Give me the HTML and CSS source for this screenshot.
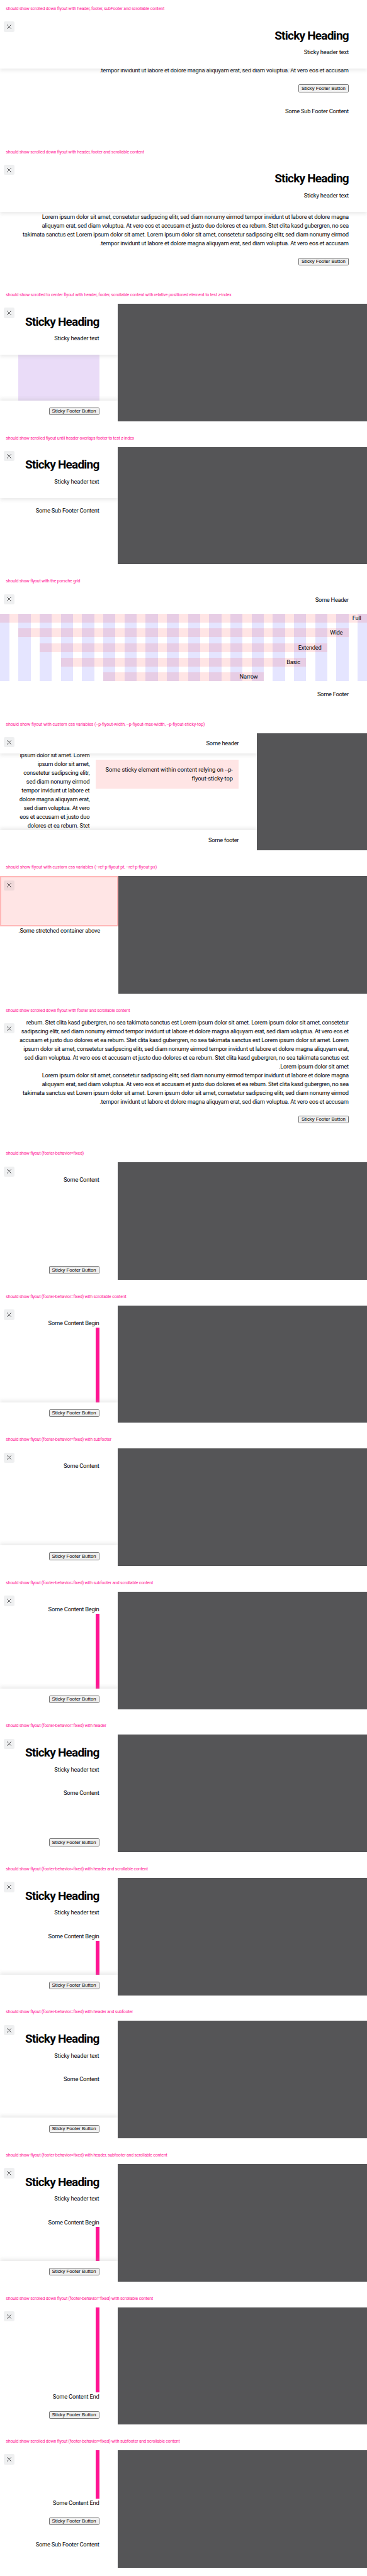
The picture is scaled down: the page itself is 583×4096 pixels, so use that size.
FILE: index.html
```html
<!DOCTYPE html>
<html lang="en">
<head>
<meta charset="utf-8">
<title>Flyout states</title>
<link rel="stylesheet" href="styles.css">
</head>
<body>
<svg class="defs" aria-hidden="true"><symbol id="close" viewBox="0 0 12 12"><path d="M.4.4 11.6 11.6M11.6.4.4 11.6" fill="none" stroke="#010205" stroke-width="1.2"/></symbol></svg>

<section class="case">
  <h2 class="title">should show scrolled down flyout with header, footer, subFooter and scrollable content</h2>
  <div class="stage"><div class="flyout full">
    <button class="close"><svg><use href="#close"/></svg></button>
    <header class="header raised"><h1 class="heading">Sticky Heading</h1><p>Sticky header text</p></header>
    <div class="content tucked"><p>.tempor invidunt ut labore et dolore magna aliquyam erat, sed diam voluptua. At vero eos et accusam</p></div>
    <footer class="footer inline-footer"><button class="btn">Sticky Footer Button</button></footer>
    <div class="sub-footer">Some Sub Footer Content</div>
  </div></div>
</section>

<section class="case">
  <h2 class="title">should show scrolled down flyout with header, footer and scrollable content</h2>
  <div class="stage"><div class="flyout full">
    <button class="close"><svg><use href="#close"/></svg></button>
    <header class="header raised"><h1 class="heading">Sticky Heading</h1><p>Sticky header text</p></header>
    <div class="content below"><p>Lorem ipsum dolor sit amet, consetetur sadipscing elitr, sed diam nonumy eirmod tempor invidunt ut labore et dolore magna<br>aliquyam erat, sed diam voluptua. At vero eos et accusam et justo duo dolores et ea rebum. Stet clita kasd gubergren, no sea<br>takimata sanctus est Lorem ipsum dolor sit amet. Lorem ipsum dolor sit amet, consetetur sadipscing elitr, sed diam nonumy eirmod<br>.tempor invidunt ut labore et dolore magna aliquyam erat, sed diam voluptua. At vero eos et accusam</p></div>
    <footer class="footer"><button class="btn">Sticky Footer Button</button></footer>
  </div></div>
</section>

<section class="case">
  <h2 class="title wordy">should show scrolled to center flyout with header, footer, scrollable content with relative positioned element to test z-index</h2>
  <div class="stage"><div class="flyout">
    <button class="close"><svg><use href="#close"/></svg></button>
    <header class="header raised"><h1 class="heading">Sticky Heading</h1><p>Sticky header text</p></header>
    <div class="content fill"><div class="lilac"></div></div>
    <footer class="footer lifted"><button class="btn">Sticky Footer Button</button></footer>
  </div></div>
</section>

<section class="case">
  <h2 class="title">should show scrolled flyout until header overlaps footer to test z-index</h2>
  <div class="stage"><div class="flyout">
    <button class="close"><svg><use href="#close"/></svg></button>
    <header class="header raised"><h1 class="heading">Sticky Heading</h1><p>Sticky header text</p></header>
    <div class="sub-footer near">Some Sub Footer Content</div>
  </div></div>
</section>

<section class="case">
  <h2 class="title">should show flyout with the porsche grid</h2>
  <div class="stage"><div class="flyout full">
    <button class="close"><svg><use href="#close"/></svg></button>
    <header class="header small">Some Header</header>
    <div class="grid">
      <div class="columns"><i></i><i></i><i></i><i></i><i></i><i></i><i></i><i></i><i></i><i></i><i></i><i></i><i></i><i></i><i></i><i></i><i></i><i></i></div>
      <span class="span g-full">Full</span>
      <span class="span g-wide">Wide</span>
      <span class="span g-extended">Extended</span>
      <span class="span g-basic">Basic</span>
      <span class="span g-narrow">Narrow</span>
    </div>
    <footer class="footer text-footer">Some Footer</footer>
  </div></div>
</section>

<section class="case">
  <h2 class="title dashed">should show flyout with custom css variables (--p-flyout-width, --p-flyout-max-width, --p-flyout-sticky-top)</h2>
  <div class="stage"><div class="flyout custom">
    <button class="close"><svg><use href="#close"/></svg></button>
    <header class="header small raised">Some header</header>
    <div class="content fill split">
      <p class="column">ipsum dolor sit amet. Lorem<br>ipsum dolor sit amet,<br>consetetur sadipscing elitr,<br>sed diam nonumy eirmod<br>tempor invidunt ut labore et<br>dolore magna aliquyam erat,<br>sed diam voluptua. At vero<br>eos et accusam et justo duo<br>dolores et ea rebum. Stet</p>
      <p class="sticky-box">Some sticky element within content relying on --p-<br>flyout-sticky-top</p>
    </div>
    <footer class="footer lifted text-footer">Some footer</footer>
  </div></div>
</section>

<section class="case">
  <h2 class="title dashed">should show flyout with custom css variables (--ref-p-flyout-pt, --ref-p-flyout-px)</h2>
  <div class="stage"><div class="flyout stretched">
    <button class="close"><svg><use href="#close"/></svg></button>
    <div class="stretch-box"></div>
    <p class="content">.Some stretched container above</p>
  </div></div>
</section>

<section class="case">
  <h2 class="title">should show scrolled down flyout with footer and scrollable content</h2>
  <div class="stage"><div class="flyout full">
    <button class="close"><svg><use href="#close"/></svg></button>
    <div class="content scrolled"><p>rebum. Stet clita kasd gubergren, no sea takimata sanctus est Lorem ipsum dolor sit amet. Lorem ipsum dolor sit amet, consetetur<br>sadipscing elitr, sed diam nonumy eirmod tempor invidunt ut labore et dolore magna aliquyam erat, sed diam voluptua. At vero eos et<br>accusam et justo duo dolores et ea rebum. Stet clita kasd gubergren, no sea takimata sanctus est Lorem ipsum dolor sit amet. Lorem<br>ipsum dolor sit amet, consetetur sadipscing elitr, sed diam nonumy eirmod tempor invidunt ut labore et dolore magna aliquyam erat,<br>sed diam voluptua. At vero eos et accusam et justo duo dolores et ea rebum. Stet clita kasd gubergren, no sea takimata sanctus est<br>.Lorem ipsum dolor sit amet<br>Lorem ipsum dolor sit amet, consetetur sadipscing elitr, sed diam nonumy eirmod tempor invidunt ut labore et dolore magna<br>aliquyam erat, sed diam voluptua. At vero eos et accusam et justo duo dolores et ea rebum. Stet clita kasd gubergren, no sea<br>takimata sanctus est Lorem ipsum dolor sit amet. Lorem ipsum dolor sit amet, consetetur sadipscing elitr, sed diam nonumy eirmod<br>.tempor invidunt ut labore et dolore magna aliquyam erat, sed diam voluptua. At vero eos et accusam</p></div>
    <footer class="footer"><button class="btn">Sticky Footer Button</button></footer>
  </div></div>
</section>

<section class="case">
  <h2 class="title">should show flyout (footer-behavior=fixed)</h2>
  <div class="stage"><div class="flyout">
    <button class="close"><svg><use href="#close"/></svg></button>
    <div class="content fill padded"><p>Some Content</p></div>
    <footer class="footer"><button class="btn">Sticky Footer Button</button></footer>
  </div></div>
</section>

<section class="case">
  <h2 class="title">should show flyout (footer-behavior=fixed) with scrollable content</h2>
  <div class="stage"><div class="flyout">
    <button class="close"><svg><use href="#close"/></svg></button>
    <div class="content fill padded"><p>Some Content Begin</p><div class="bar"></div></div>
    <footer class="footer lifted"><button class="btn">Sticky Footer Button</button></footer>
  </div></div>
</section>

<section class="case">
  <h2 class="title">should show flyout (footer-behavior=fixed) with subfooter</h2>
  <div class="stage"><div class="flyout">
    <button class="close"><svg><use href="#close"/></svg></button>
    <div class="content fill padded"><p>Some Content</p></div>
    <footer class="footer lifted"><button class="btn">Sticky Footer Button</button></footer>
  </div></div>
</section>

<section class="case">
  <h2 class="title">should show flyout (footer-behavior=fixed) with subfooter and scrollable content</h2>
  <div class="stage"><div class="flyout">
    <button class="close"><svg><use href="#close"/></svg></button>
    <div class="content fill padded"><p>Some Content Begin</p><div class="bar"></div></div>
    <footer class="footer lifted"><button class="btn">Sticky Footer Button</button></footer>
  </div></div>
</section>

<section class="case">
  <h2 class="title">should show flyout (footer-behavior=fixed) with header</h2>
  <div class="stage"><div class="flyout">
    <button class="close"><svg><use href="#close"/></svg></button>
    <header class="header"><h1 class="heading">Sticky Heading</h1><p>Sticky header text</p></header>
    <div class="content fill spaced"><p>Some Content</p></div>
    <footer class="footer"><button class="btn">Sticky Footer Button</button></footer>
  </div></div>
</section>

<section class="case">
  <h2 class="title">should show flyout (footer-behavior=fixed) with header and scrollable content</h2>
  <div class="stage"><div class="flyout">
    <button class="close"><svg><use href="#close"/></svg></button>
    <header class="header"><h1 class="heading">Sticky Heading</h1><p>Sticky header text</p></header>
    <div class="content fill spaced"><p>Some Content Begin</p><div class="bar"></div></div>
    <footer class="footer lifted"><button class="btn">Sticky Footer Button</button></footer>
  </div></div>
</section>

<section class="case">
  <h2 class="title">should show flyout (footer-behavior=fixed) with header and subfooter</h2>
  <div class="stage"><div class="flyout">
    <button class="close"><svg><use href="#close"/></svg></button>
    <header class="header"><h1 class="heading">Sticky Heading</h1><p>Sticky header text</p></header>
    <div class="content fill spaced"><p>Some Content</p></div>
    <footer class="footer lifted"><button class="btn">Sticky Footer Button</button></footer>
  </div></div>
</section>

<section class="case">
  <h2 class="title">should show flyout (footer-behavior=fixed) with header, subfooter and scrollable content</h2>
  <div class="stage"><div class="flyout">
    <button class="close"><svg><use href="#close"/></svg></button>
    <header class="header"><h1 class="heading">Sticky Heading</h1><p>Sticky header text</p></header>
    <div class="content fill spaced"><p>Some Content Begin</p><div class="bar"></div></div>
    <footer class="footer lifted"><button class="btn">Sticky Footer Button</button></footer>
  </div></div>
</section>

<section class="case">
  <h2 class="title">should show scrolled down flyout (footer-behavior=fixed) with scrollable content</h2>
  <div class="stage"><div class="flyout">
    <button class="close"><svg><use href="#close"/></svg></button>
    <div class="content fill end"><div class="bar"></div><p>Some Content End</p></div>
    <footer class="footer"><button class="btn">Sticky Footer Button</button></footer>
  </div></div>
</section>

<section class="case">
  <h2 class="title">should show scrolled down flyout (footer-behavior=fixed) with subfooter and scrollable content</h2>
  <div class="stage"><div class="flyout">
    <button class="close"><svg><use href="#close"/></svg></button>
    <div class="content short-bar"><div class="bar"></div><p>Some Content End</p></div>
    <footer class="footer inline-footer"><button class="btn">Sticky Footer Button</button></footer>
    <div class="sub-footer">Some Sub Footer Content</div>
  </div></div>
</section>
</body>
</html>
```
FILE: styles.css
```css
/* 1rem = ten design pixels */
html { font-size: 5.8345px; }
* { box-sizing: border-box; }
body {
  margin: 0;
  background: #fff;
  color: #010205;
  font-family: Roboto, "Liberation Sans", sans-serif;
  font-size: 1.6rem;
  line-height: 2.4rem;
  letter-spacing: -.0365rem;
  overflow-x: hidden;
}
p, h1, h2 { margin: 0; }
.defs { position: absolute; width: 0; height: 0; }

.case { height: 39rem; overflow: hidden; }
.title {
  height: 4.8rem;
  padding: 1.2rem 0 0 1.6rem;
  color: #ff1493;
  font-size: 1.2rem;
  font-weight: 400;
  letter-spacing: -.033rem;
  white-space: nowrap;
}
.title.wordy { letter-spacing: -.027rem; }
.title.dashed { letter-spacing: -.008rem; }
.stage { display: flex; height: 32rem; overflow: hidden; background: #555557; }

.flyout {
  position: relative;
  display: flex;
  flex-direction: column;
  width: 32rem;
  flex: none;
  overflow: hidden;
  background: #fff;
  text-align: right;
  white-space: nowrap;
}
.full { width: 100%; }
.custom { width: 70rem; }
.stretched { width: 32.2rem; }

.close {
  position: absolute;
  z-index: 3;
  top: 1.1rem;
  left: 1.1rem;
  display: flex;
  align-items: center;
  justify-content: center;
  width: 2.8rem;
  height: 2.8rem;
  padding: 0;
  border: 0;
  border-radius: .4rem;
  background: rgba(100, 105, 115, .1);
}
.close svg { width: 1.2rem; height: 1.2rem; }

.header {
  position: relative;
  z-index: 2;
  flex: none;
  height: 13.9rem;
  padding: 3.2rem 5rem 0;
  background: #fff;
}
.header.small { height: 5.6rem; padding-top: 1.6rem; letter-spacing: -.05rem; }
.heading {
  margin-bottom: 1.6rem;
  font-size: 3.25rem;
  font-weight: 700;
  line-height: 3.5rem;
  letter-spacing: -.13rem;
}
.header p { letter-spacing: -.024rem; }
.raised { box-shadow: 0 .5rem 1rem rgba(160, 160, 160, .22); }
.lifted { box-shadow: 0 -.5rem 1rem rgba(160, 160, 160, .22); }

.content { padding: 0 5rem; }
.fill { flex: 1; min-height: 0; }
.tucked { margin-top: -.75rem; }
.below { height: 10.6rem; padding-top: .15rem; }
.scrolled { height: 24.75rem; margin-top: -.35rem; }
.padded { display: flex; flex-direction: column; padding-top: 3.6rem; }
.spaced { display: flex; flex-direction: column; padding-top: .8rem; }
.end { display: flex; flex-direction: column; padding-bottom: .8rem; }
.short-bar { display: flex; flex-direction: column; height: 16.4rem; padding-bottom: .8rem; }

.lilac { height: 100%; background: #eadcf8; }
.bar { flex: 1; width: 1rem; margin-left: auto; background: #ff1493; }

.footer {
  position: relative;
  z-index: 1;
  display: flex;
  flex: none;
  justify-content: flex-end;
  align-items: flex-start;
  height: 5.6rem;
  padding: 1.9rem 5rem 0;
  background: #fff;
}
.text-footer { padding-top: 1.6rem; letter-spacing: -.05rem; }
.inline-footer { height: 8.1rem; }
.tucked + .inline-footer { height: 8.8rem; padding-top: 2.7rem; }
.btn {
  width: 13.7rem;
  height: 2.1rem;
  padding: 0;
  border: 1px solid #767676;
  border-radius: .3rem;
  background: #efefef;
  color: #000;
  font: 1.333rem/1 "Liberation Sans", Arial, sans-serif;
  letter-spacing: 0;
}
.sub-footer { padding: 0 5rem; letter-spacing: -.042rem; }
.sub-footer.near { padding-top: 2.3rem; }

.grid {
  display: grid;
  grid-template-columns: 2.6rem repeat(16, 1fr) 2.6rem;
  grid-template-rows: repeat(5, 2.4rem);
  gap: 1.6rem 2.45rem;
  margin: .9rem 0 .8rem;
}
.columns { display: grid; grid-area: 1 / 1 / -1 / -1; grid-template-columns: subgrid; }
.columns i { background: rgba(0, 0, 255, .1); }
.span { padding-right: 1.6rem; background: rgba(255, 0, 0, .1); }
.g-full { grid-area: 1 / 1 / 2 / -1; }
.g-wide { grid-area: 2 / 2 / 3 / -2; }
.g-extended { grid-area: 3 / 3 / 4 / -3; }
.g-basic { grid-area: 4 / 4 / 5 / -4; }
.g-narrow { grid-area: 5 / 6 / 6 / -6; }

.split { display: grid; grid-template-columns: 19.4rem 38.9rem; column-gap: 1.7rem; align-items: start; }
.column { margin-top: -.75rem; }
.sticky-box { margin-top: 1.6rem; padding: 1.6rem; background: #ffe5e5; letter-spacing: -.009rem; }

.stretch-box { height: 13.6rem; border: .4rem solid #ffb6b6; background: #ffe5e5; }
```
